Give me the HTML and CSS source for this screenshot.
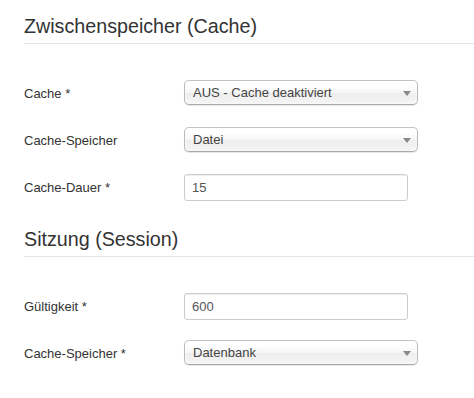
FILE: index.html
```html
<!DOCTYPE html>
<html lang="de">
<head>
  <meta charset="UTF-8" />
  <title>Zwischenspeicher</title>
  <link rel="stylesheet" href="styles.css">
</head>
<body>
<div class="page">
  <fieldset class="section">
    <legend class="legend">Zwischenspeicher (Cache)</legend>
    <div class="control-group">
      <label class="control-label">Cache *</label>
      <div class="dropdown"><span>AUS - Cache deaktiviert</span><b class="arrow"></b></div>
    </div>
    <div class="control-group">
      <label class="control-label">Cache-Speicher</label>
      <div class="dropdown"><span>Datei</span><b class="arrow"></b></div>
    </div>
    <div class="control-group">
      <label class="control-label">Cache-Dauer *</label>
      <input class="text-input" type="text" value="15" />
    </div>
  </fieldset>

  <fieldset class="section">
    <legend class="legend">Sitzung (Session)</legend>
    <div class="control-group">
      <label class="control-label">Gültigkeit *</label>
      <input class="text-input" type="text" value="600" />
    </div>
    <div class="control-group">
      <label class="control-label">Cache-Speicher *</label>
      <div class="dropdown"><span>Datenbank</span><b class="arrow"></b></div>
    </div>
  </fieldset>
</div>
</body>
</html>
```

FILE: styles.css
```css
body {
  margin: 0;
  padding: 0;
  background: #fff;
  font-family: "Liberation Sans", Arial, sans-serif;
  color: #333;
}
.page {
  padding: 14px 0 0 24px;
}
.section {
  border: none;
  margin: 0;
  padding: 0;
}
.section + .section {
  margin-top: 27px;
}
.legend {
  display: block;
  width: 100%;
  box-sizing: border-box;
  padding: 0 0 5px 0;
  margin: 0 0 36px 0;
  font-size: 19.7px;
  line-height: 24px;
  color: #333;
  border-bottom: 1px solid #e5e5e5;
}
.control-group {
  display: flex;
  align-items: flex-start;
  height: 26px;
  margin-bottom: 21px;
}
.control-group:last-child {
  margin-bottom: 0;
}
.control-label {
  width: 160px;
  flex-shrink: 0;
  padding-top: 5px;
  font-size: 13px;
  line-height: 18px;
  color: #333;
}
.dropdown {
  position: relative;
  box-sizing: border-box;
  width: 234px;
  height: 25px;
  padding: 0 0 0 8px;
  border: 1px solid #aaa;
  border-color: #c4c4c4 #bbb #aaa;
  border-radius: 5px;
  background: linear-gradient(#fff 20%, #f6f6f6 50%, #eee 52%, #f4f4f4 100%);
  box-shadow: 0 0 3px #fff inset, 0 1px 1px rgba(0,0,0,0.1);
  font-size: 13px;
  line-height: 23px;
  color: #444;
}
.arrow {
  position: absolute;
  right: 6px;
  top: 10px;
  width: 0;
  height: 0;
  border-left: 4px solid transparent;
  border-right: 4px solid transparent;
  border-top: 5px solid #888;
}
.text-input {
  box-sizing: border-box;
  width: 224px;
  height: 27px;
  margin: 0;
  padding: 0 7px;
  border: 1px solid #ccc;
  border-radius: 3px;
  box-shadow: inset 0 1px 1px rgba(0,0,0,0.075);
  font-family: "Liberation Sans", Arial, sans-serif;
  font-size: 13px;
  color: #555;
  background: #fff;
}
```
